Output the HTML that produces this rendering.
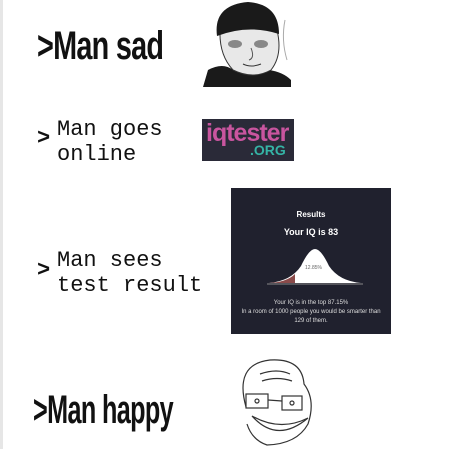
<!DOCTYPE html><html><head><style>
body{margin:0;width:460px;height:449px;background:#fff;position:relative;overflow:hidden;font-family:"Liberation Sans",sans-serif}
.a{position:absolute;white-space:nowrap}
.big{font-family:"Liberation Sans",sans-serif;font-weight:bold;font-size:40px;color:#111;transform-origin:0 0;letter-spacing:-1px}
.mono{font-family:"Liberation Mono",monospace;font-size:22px;color:#111;line-height:25px}
</style></head><body>
<div class="a" style="left:0;top:0;width:3px;height:449px;background:#e6e6e6"></div>
<div class="a big" style="left:37px;top:24px;transform:scaleX(0.72)">&gt;Man sad</div>
<svg class="a" style="left:203px;top:0" width="90" height="87" viewBox="0 0 90 87">
<path d="M0 87 L5 70 Q20 62 30 70 Q50 80 66 70 Q80 72 88 80 L88 87Z" fill="#1a1a1a"/>
<path d="M17 30 Q45 22 74 30 Q80 55 68 70 Q50 80 30 70 Q16 55 17 30Z" fill="#e8e8e8" stroke="#333"/>
<path d="M14 36 Q10 5 45 2 Q76 4 76 34 Q45 24 14 36 Z" fill="#1a1a1a"/>
<ellipse cx="32" cy="44" rx="7" ry="4" fill="#888"/><ellipse cx="58" cy="44" rx="7" ry="4" fill="#888"/>
<path d="M48 48 Q52 58 46 60" stroke="#555" fill="none"/>
<path d="M40 64 Q48 68 58 64" stroke="#333" fill="none"/>
<path d="M82 20 Q78 40 84 60" stroke="#aaa" fill="none"/>
</svg>
<div class="a mono" style="left:37px;top:126px;font-weight:bold">&gt;</div>
<div class="a mono" style="left:57px;top:117px">Man goes<br>online</div>
<div class="a" style="left:202px;top:119px;width:92px;height:42px;background:#2a2a38">
<div class="a" style="left:4px;top:0;font-weight:bold;font-size:25px;color:#c9559f;letter-spacing:-1px">iqtester</div>
<div class="a" style="left:48px;top:23px;font-weight:bold;font-size:14px;color:#35b3a5">.ORG</div></div>
<div class="a mono" style="left:37px;top:258px;font-weight:bold">&gt;</div>
<div class="a mono" style="left:57px;top:248px">Man sees<br>test result</div>
<div class="a" style="left:231px;top:188px;width:160px;height:146px;background:#20212e;color:#fff;text-align:center">
<div style="font-size:8px;font-weight:bold;margin-top:22px">Results</div>
<div style="font-size:9px;font-weight:bold;margin-top:8px">Your IQ is 83</div>
<svg width="160" height="50" style="display:block;margin-top:4px"><path d="M38 42 Q60 40 70 25 Q78 8 84 8 Q90 8 98 25 Q108 40 130 42Z" fill="#fff"/><path d="M38 42 Q56 41 64 33 L64 42Z" fill="#8a4a4a"/><line x1="36" y1="43" x2="132" y2="43" stroke="#888"/><text x="74" y="28" font-size="5" fill="#666">12.85%</text></svg>
<div style="font-size:6px;margin-top:8px;line-height:9px;color:#ddd">Your IQ is in the top 87.15%<br>In a room of 1000 people you would be smarter than<br>129 of them.</div></div>
<div class="a big" style="left:33px;top:388px;transform:scaleX(0.63)">&gt;Man happy</div>
<svg class="a" style="left:232px;top:352px" width="100" height="96" viewBox="0 0 100 96" fill="none" stroke="#333" stroke-width="1.2">
<path d="M14 55 Q2 12 38 8 Q70 6 72 32 Q84 48 76 72 Q65 92 35 93 Q20 88 15 72"/>
<rect x="14" y="42" width="22" height="14"/><rect x="50" y="44" width="20" height="14"/><path d="M36 48 L50 49"/>
<circle cx="25" cy="49" r="2"/><circle cx="60" cy="51" r="2"/>
<path d="M20 64 Q45 92 76 66 Q48 80 20 64Z"/>
<path d="M28 22 Q45 16 58 22 M30 29 Q45 24 60 29"/>
</svg>
</body></html>
